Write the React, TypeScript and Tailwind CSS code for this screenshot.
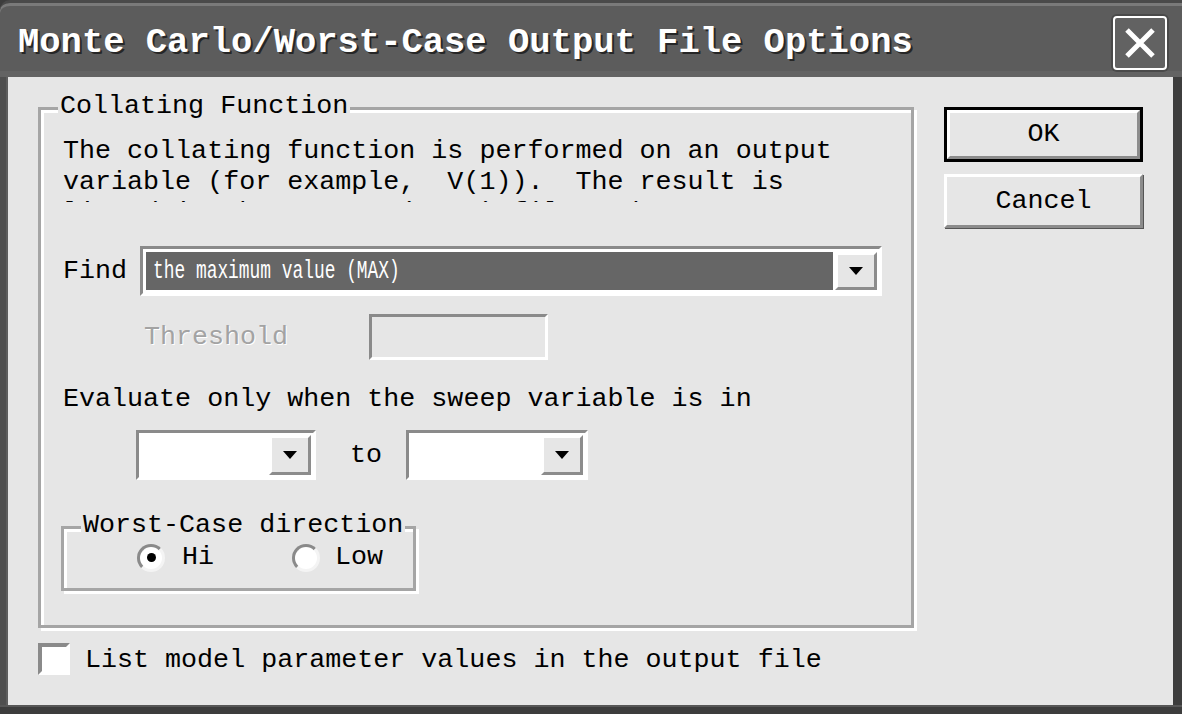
import React from 'react';

const mono = "font-['Liberation_Mono','DejaVu_Sans_Mono',monospace]";

const Arrow: React.FC = () => (
    <svg width="14" height="8" viewBox="0 0 14 8">
        <path d="M0 0 H14 L7 8 Z" fill="#000" />
    </svg>
);

const ArrowButton: React.FC = () => (
    <div className="w-[42px] h-full bg-[#e6e6e6] border-[3px] border-t-white border-l-white border-r-[#8c8c8c] border-b-[#8c8c8c] flex items-center justify-center">
        <Arrow />
    </div>
);

const Combo: React.FC<{ width: string }> = ({ width }) => (
    <div className={`${width} h-[50px] border-[3px] border-t-[#8a8a8a] border-l-[#8a8a8a] border-r-white border-b-white bg-white flex p-[2px] pl-0`}>
        <div className="flex-1" />
        <ArrowButton />
    </div>
);

const Radio: React.FC<{ checked?: boolean }> = ({ checked }) => (
    <div className="w-[28px] h-[28px] rounded-full border-[3px] border-t-[#8a8a8a] border-l-[#8a8a8a] border-r-[#f4f4f4] border-b-[#f4f4f4] bg-white flex items-center justify-center">
        {checked && <div className="w-[9px] h-[9px] rounded-full bg-black" />}
    </div>
);

export default function App() {
    return (
        <div className={`w-[1182px] h-[714px] bg-[#3d3d3d] flex flex-col overflow-hidden ${mono}`}>
            {/* title bar */}
            <div className="h-[77px] shrink-0 bg-[#5c5c5c] border-t-[3px] border-t-[#4a4a4a] shadow-[inset_0_3px_0_#7a7a7a,inset_0_-6px_0_#636363] rounded-tl-[10px] flex items-center pl-[18px] pr-[15px] pt-[6px]">
                <span className="text-[35.5px] leading-none font-bold text-white [text-shadow:2px_2px_0_#262626] whitespace-pre">
                    Monte Carlo/Worst-Case Output File Options
                </span>
                <div className="ml-auto w-[54px] h-[54px] rounded-[4px] border-2 border-white bg-[#626262] shadow-[0_0_0_2px_#4a4a4a] flex items-center justify-center">
                    <svg width="36" height="36" viewBox="0 0 36 36">
                        <path d="M5 5 L31 31 M31 5 L5 31" stroke="#fff" strokeWidth="5" />
                    </svg>
                </div>
            </div>

            {/* window body */}
            <div className="flex h-[628px]">
                <div className="w-[8px] bg-[#4f4f4f] border-r-[2px] border-r-[#5e5e5e]" />
                <div className="flex-1 bg-[#e6e6e6] pl-[30px] pt-[30px] text-black text-[26.7px] leading-[31px]">
                    <div className="flex gap-[30px]">
                        {/* Collating Function group */}
                        <div className="relative w-[876px] h-[521px] border-[3px] border-[#a5a5a5] shadow-[inset_3px_3px_0_#fff,3px_3px_0_#fff] pl-[22px]">
                            <span className="absolute left-[17px] top-[-19px] px-[2px] bg-[#e6e6e6] whitespace-pre">Collating Function</span>
                            <div className="mt-[26px] h-[66px] overflow-hidden whitespace-pre">
                                <div>The collating function is performed on an output</div>
                                <div>variable (for example,  V(1)).  The result is</div>
                                <div>listed in the output (.OUT) file and</div>
                            </div>

                            <div className="mt-[44px] flex items-center">
                                <span className="w-[77px]">Find</span>
                                <div className="w-[742px] h-[50px] border-[3px] border-t-[#8a8a8a] border-l-[#8a8a8a] border-r-white border-b-white bg-white flex p-[3px] pr-[2px] gap-[2px]">
                                    <div className="flex-1 bg-[#666666] flex items-center pl-[7px] overflow-hidden">
                                        <span className="inline-block origin-left scale-x-[0.67] text-white whitespace-pre">the maximum value (MAX)</span>
                                    </div>
                                    <ArrowButton />
                                </div>
                            </div>

                            <div className="mt-[18px] flex items-center">
                                <span className="ml-[81px] w-[225px] text-[#a3a3a3] [text-shadow:1px_1px_0_#fff]">Threshold</span>
                                <div className="w-[179px] h-[46px] border-[3px] border-t-[#8a8a8a] border-l-[#8a8a8a] border-r-white border-b-white bg-[#e6e6e6]" />
                            </div>

                            <div className="mt-[24px] whitespace-pre">Evaluate only when the sweep variable is in</div>

                            <div className="mt-[15px] flex items-center pl-[73px]">
                                <Combo width="w-[180px]" />
                                <span className="ml-[34px] w-[32px]">to</span>
                                <div className="ml-[24px]">
                                    <Combo width="w-[182px]" />
                                </div>
                            </div>

                            {/* Worst-Case direction group */}
                            <div className="relative mt-[46px] ml-[-2px] w-[355px] h-[65px] border-[3px] border-[#a5a5a5] shadow-[inset_3px_3px_0_#fff,3px_3px_0_#fff] flex items-center pl-[73px] pb-[2px]">
                                <span className="absolute left-[17px] top-[-19px] px-[2px] bg-[#e6e6e6] whitespace-pre">Worst-Case direction</span>
                                <Radio checked />
                                <span className="ml-[17px]">Hi</span>
                                <div className="ml-[78px]">
                                    <Radio />
                                </div>
                                <span className="ml-[15px]">Low</span>
                            </div>
                        </div>

                        {/* buttons */}
                        <div className="w-[199px] flex flex-col gap-[12px]">
                            <div className="h-[55px] border-[3px] border-black">
                                <div className="h-full border-[3px] border-t-white border-l-white border-r-[#8c8c8c] border-b-[#8c8c8c] flex items-center justify-center">
                                    OK
                                </div>
                            </div>
                            <div className="h-[54px] border-[3px] border-t-white border-l-white border-r-[#8c8c8c] border-b-[#8c8c8c] shadow-[1px_1px_0_#555] flex items-center justify-center">
                                Cancel
                            </div>
                        </div>
                    </div>

                    <div className="mt-[14px] flex items-center">
                        <div className="w-[32px] h-[32px] border-[4px] border-t-[#8a8a8a] border-l-[#8a8a8a] border-r-white border-b-white bg-white" />
                        <span className="ml-[15px] pt-[3px] whitespace-pre">List model parameter values in the output file</span>
                    </div>
                </div>
                <div className="w-[9px] bg-[#3d3d3d]" />
            </div>

            <div className="flex-1 bg-[#3d3d3d] border-t-[2px] border-t-[#575757]" />
        </div>
    );
}
